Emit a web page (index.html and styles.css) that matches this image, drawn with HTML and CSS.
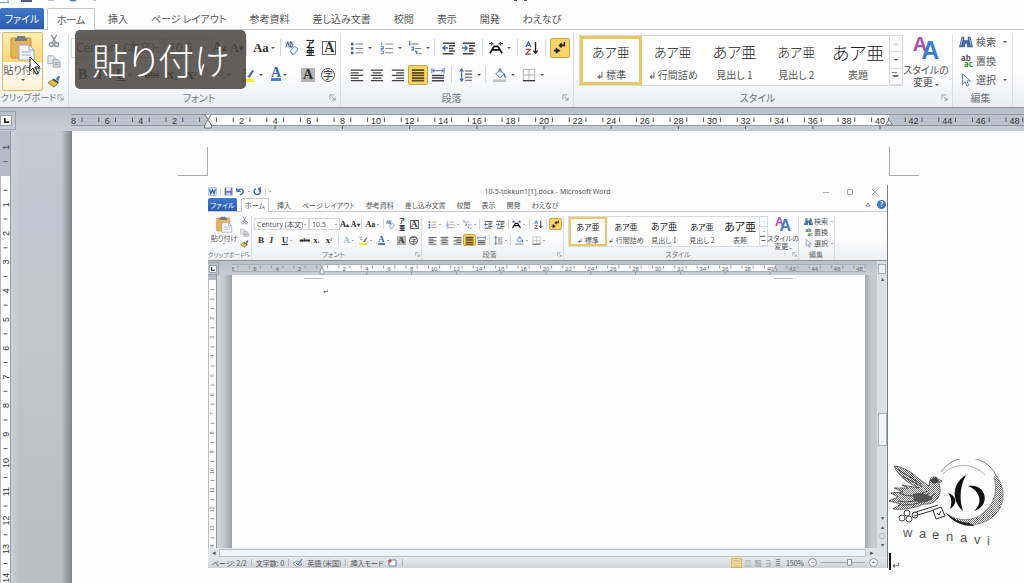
FILE: index.html
```html
<!DOCTYPE html>
<html lang="ja">
<head>
  <meta charset="UTF-8">
  <title>10-5-tokkun1[1].docx - Microsoft Word</title>
  <link rel="stylesheet" href="styles.css">
</head>
<body>

<!-- アイコン -->
<svg class="sprite" aria-hidden="true">
  <symbol id="i-paste" viewBox="0 0 26 26"><rect x="1" y="3" width="20" height="20" rx="1" fill="#e9b35a" stroke="#c98c35"/><path d="M7 3V1h8v2h2v3H5V3z" fill="#777d86"/><path d="M9 10h10l5 5v10H9z" fill="#f4f8fd" stroke="#98a8c0"/><path d="M19 10v5h5M12 17h9M12 20h9" fill="none" stroke="#98a8c0"/></symbol>
  <symbol id="i-cut" viewBox="0 0 16 16"><path d="M5 1l5 9M11 1L6 10" stroke="#858b93" stroke-width="1.5"/><circle cx="5" cy="12" r="2.300" fill="none" stroke="#858b93" stroke-width="1.500"/><circle cx="11" cy="12" r="2.300" fill="none" stroke="#858b93" stroke-width="1.500"/></symbol>
  <symbol id="i-copy" viewBox="0 0 16 16"><path d="M1 2h6l2 2v7H1z" fill="#e6e7e9" stroke="#a8abb0"/><path d="M7 6h5l3 3v6H7z" fill="#d5d7da" stroke="#9a9da3"/><path d="M9 10h4M9 12h4" stroke="#9a9da3"/></symbol>
  <symbol id="i-brush" viewBox="0 0 16 16"><path d="M10 6l3-4 2 1-2 5z" fill="#5d6fa8"/><path d="M1 10l6-4 6 4-5 5z" fill="#e3bd3e" stroke="#8d7a35"/><path d="M7 6l6 4" stroke="#3c4668" stroke-width="2"/></symbol>
  <symbol id="i-eraser" viewBox="0 0 16 16"><rect x="0" y="0" width="11" height="8" fill="#dfe6f2"/><path d="M1 7l2-6 2 6M6 1v6h2q2-3 0-3q1-3-2-3" fill="none" stroke="#34466f"/><path d="M6 11l5-5 4 3-4 6H8z" fill="#e9effa" stroke="#5d79ad"/></symbol>
  <symbol id="i-bullets" viewBox="0 0 16 16"><path d="M1 2h3v3H1zM1 7h3v3H1zM1 12h3v3H1z" fill="#4a6390"/><path d="M6 3.500h9M6 8.500h9M6 13.500h9" stroke="#777"/></symbol>
  <symbol id="i-numbers" viewBox="0 0 16 16"><path d="M2 1v4M1 6.500h3v2H1v1h3M1 11.500h3v3H1" fill="none" stroke="#4a6fb5"/><path d="M6 3.500h9M6 8.500h9M6 13.500h9" stroke="#777"/></symbol>
  <symbol id="i-multi" viewBox="0 0 16 16"><path d="M1 1h1v4M4 7h2v3H4M8 12h2v3" fill="none" stroke="#4a6fb5" stroke-width="1.500"/><path d="M4 3.500h8M8 8.500h7M12 14.500h4" stroke="#666"/></symbol>
  <symbol id="i-outdent" viewBox="0 0 16 16"><path d="M1 2.500h14M8 5.500h7M8 8.500h5M8 11.500h7M1 14.500h12" stroke="#444" stroke-width="1.600"/><path d="M7 8H1M4 5L1 8l3 3" fill="none" stroke="#3f649e" stroke-width="1.500"/></symbol>
  <symbol id="i-indent" viewBox="0 0 16 16"><path d="M1 2.500h14M8 5.500h7M8 8.500h5M8 11.500h7M1 14.500h12" stroke="#444" stroke-width="1.600"/><path d="M0 8h6M3 5l3 3-3 3" fill="none" stroke="#3f649e" stroke-width="1.500"/></symbol>
  <symbol id="i-expand" viewBox="0 0 16 16"><path d="M1 14L6 6h4l5 8M4 10h8" fill="none" stroke="#111" stroke-width="2"/><path d="M0 3h5M3 1v4M11 3h5M13 1v4" stroke="#334674" stroke-width="1.400"/></symbol>
  <symbol id="i-sort" viewBox="0 0 16 16"><path d="M1 7l3-6 3 6M2 5h4" fill="none" stroke="#3f66ad" stroke-width="1.400"/><path d="M1 9.500h5L1 15h6" fill="none" stroke="#a13a43" stroke-width="1.400"/><path d="M12 1v13M9.500 11l2.500 3 2.500-3" fill="none" stroke="#222" stroke-width="1.600"/></symbol>
  <symbol id="i-mark" viewBox="0 0 16 16"><path d="M13 1v4H8M10 2.500L7.500 5 10 7.500M1 11h6M4 8v6M7 11l-3-2v4z" fill="none" stroke="#222" stroke-width="1.800"/></symbol>
  <symbol id="i-left" viewBox="0 0 16 16"><path d="M1 2.500h14M1 5.500h9M1 8.500h14M1 11.500h9M1 14.500h14" stroke="#444" stroke-width="1.500"/></symbol>
  <symbol id="i-center" viewBox="0 0 16 16"><path d="M1 2.500h14M3 5.500h10M1 8.500h14M3 11.500h10M1 14.500h14" stroke="#444" stroke-width="1.500"/></symbol>
  <symbol id="i-right" viewBox="0 0 16 16"><path d="M1 2.500h14M6 5.500h9M1 8.500h14M6 11.500h9M1 14.500h14" stroke="#444" stroke-width="1.500"/></symbol>
  <symbol id="i-justify" viewBox="0 0 16 16"><path d="M1 2.500h14M1 5.500h14M1 8.500h14M1 11.500h14M1 14.500h14" stroke="#5b4a20" stroke-width="2"/></symbol>
  <symbol id="i-distribute" viewBox="0 0 16 16"><path d="M1 0v6M15 0v6M2 3h12M4 1L2 3l2 2M12 1l2 2-2 2" fill="none" stroke="#4269ab"/><path d="M1 8.500h14M1 11.500h14M1 14.500h14" stroke="#444" stroke-width="1.700"/></symbol>
  <symbol id="i-spacing" viewBox="0 0 16 16"><path d="M3 1v14M1 4l2-3 2 3M1 12l2 3 2-3" fill="none" stroke="#3f6db4" stroke-width="1.400"/><path d="M7 3.500h8M7 7h8M7 10.500h8M7 14h8" stroke="#555" stroke-width="1.200"/></symbol>
  <symbol id="i-bucket" viewBox="0 0 16 16"><path d="M3 7l5-5 5 5-5 4z" fill="#e5ecf6" stroke="#596c8f"/><path d="M7 4V1h2v4" fill="none" stroke="#596c8f"/><path d="M12 6q4 2 2 6q-2-2-2-6" fill="#486fad"/><path d="M0 13h15v3H0z" fill="#bcc3ca"/></symbol>
  <symbol id="i-border" viewBox="0 0 16 16"><path d="M1.500 1.500h13v13M8 1.500v13M1.500 8h13M1.500 1.500v13" fill="none" stroke="#aaa"/><path d="M1 14.500h14" stroke="#333" stroke-width="1.500"/></symbol>
  <symbol id="i-binoc" viewBox="0 0 16 16"><path d="M3 2h3v4h4V2h3l3 12H9v-4H7v4H0z" fill="#44699f"/><path d="M4 4L2 12M12 4l2 8" stroke="#b3cae9"/></symbol>
  <symbol id="i-arrow" viewBox="0 0 16 16"><path d="M4 1v12l3-3 2 5 2-1-2-5h4z" fill="#fff" stroke="#5672a4"/></symbol>
  <symbol id="i-pen" viewBox="0 0 16 16"><path d="M7 10l6-8 2 1-5 8z" fill="#5a73a0"/><path d="M1 2h5M2 6h4" stroke="#333"/><path d="M0 12h15v4H0z" fill="#f5ec38"/></symbol>
  <symbol id="i-launch" viewBox="0 0 8 8"><path d="M1 6V1h5M3 3l4 4M7 4v3H4" fill="none" stroke="#8b929c"/></symbol>
  <symbol id="i-word" viewBox="0 0 16 16"><rect x="1" y="1" width="14" height="14" rx="1" fill="#dceafb" stroke="#6e95ca"/><path d="M3 4l2 8 3-7 3 7 2-8" fill="none" stroke="#2c5ca7" stroke-width="2"/></symbol>
  <symbol id="i-save" viewBox="0 0 16 16"><path d="M1 1h14v14H1z" fill="#6577b5"/><path d="M4 1h8v6H4z" fill="#eef2fb"/><path d="M4 10h8v5H4z" fill="#c9d1e8"/></symbol>
  <symbol id="i-undo" viewBox="0 0 16 16"><path d="M3 6q8-5 10 1q0 5-6 7M1 2l1 6 6-1" fill="none" stroke="#4569b8" stroke-width="2.500"/></symbol>
  <symbol id="i-redo" viewBox="0 0 16 16"><path d="M5 3q-5 3-2 8q5 5 9 0q3-5-1-8M14 1l-4 2 2 5" fill="none" stroke="#4569b8" stroke-width="2.500"/></symbol>
</svg>

<!-- タブとリボン（本体と貼り付けた画面で共用） -->
<template id="ribbon-template">
  <nav class="tabs">
    <button class="file-tab">ファイル</button>
    <a href="#" class="home-tab">ホーム</a>
    <a href="#">挿入</a>
    <a href="#">ページ レイアウト</a>
    <a href="#">参考資料</a>
    <a href="#">差し込み文書</a>
    <a href="#">校閲</a>
    <a href="#">表示</a>
    <a href="#">開発</a>
    <a href="#">わえなび</a>
    <span class="tab-tools"><svg viewBox="0 0 6 5"><path d="M1 4l2-3 2 3z" fill="none" stroke="#888"/></svg><button class="help">?</button></span>
  </nav>
  <div class="ribbon">
    <section class="group clipboard">
      <div class="tools">
        <button class="paste"><svg><use href="#i-paste"/></svg><span>貼り付け</span><i class="caret"></i></button>
        <div class="clip-side">
          <button aria-label="切り取り"><svg class="icon"><use href="#i-cut"/></svg></button>
          <button aria-label="コピー"><svg class="icon"><use href="#i-copy"/></svg></button>
          <button aria-label="書式のコピー"><svg class="icon"><use href="#i-brush"/></svg></button>
        </div>
      </div>
      <footer><span>クリップボード</span><svg><use href="#i-launch"/></svg></footer>
    </section>

    <section class="group font">
      <div class="row font-row1">
        <label class="combo"><select aria-label="フォント"><option>Century (本文)</option></select><i class="caret"></i></label>
        <label class="combo"><select aria-label="サイズ"><option>10.5</option></select><i class="caret"></i></label>
        <button class="serif">A<sup>▴</sup></button>
        <button class="serif shrink">A<sup>▾</sup></button>
        <i class="sep"></i>
        <button class="serif shrink">Aa<i class="caret"></i></button>
        <i class="sep"></i>
        <button aria-label="書式のクリア"><svg class="icon"><use href="#i-eraser"/></svg></button>
        <button class="ruby"><span>ア</span><span>亜</span></button>
        <button class="serif"><span class="boxed">A</span></button>
      </div>
      <div class="row font-row2">
        <button class="serif">B</button>
        <button class="serif italic">I</button>
        <button class="serif"><u>U</u><i class="caret"></i></button>
        <button class="serif small"><s>abc</s></button>
        <button class="serif">x<sub>₂</sub></button>
        <button class="serif">x<sup>²</sup></button>
        <i class="sep"></i>
        <button class="serif glow">A<i class="caret"></i></button>
        <button aria-label="蛍光ペン"><svg class="icon"><use href="#i-pen"/></svg><i class="caret"></i></button>
        <button class="serif"><span class="colored">A</span><i class="caret"></i></button>
        <button class="serif"><span class="shaded">A</span></button>
        <button><span class="circled">字</span></button>
      </div>
      <footer><span>フォント</span><svg><use href="#i-launch"/></svg></footer>
    </section>

    <section class="group para">
      <div class="row para-row1">
        <button aria-label="箇条書き"><svg class="icon"><use href="#i-bullets"/></svg><i class="caret"></i></button>
        <button aria-label="段落番号"><svg class="icon"><use href="#i-numbers"/></svg><i class="caret"></i></button>
        <button aria-label="アウトライン"><svg class="icon"><use href="#i-multi"/></svg><i class="caret"></i></button>
        <i class="sep"></i>
        <button aria-label="インデントを減らす"><svg class="icon"><use href="#i-outdent"/></svg></button>
        <button aria-label="インデントを増やす"><svg class="icon"><use href="#i-indent"/></svg></button>
        <i class="sep"></i>
        <button aria-label="拡張書式"><svg class="icon"><use href="#i-expand"/></svg><i class="caret"></i></button>
        <i class="sep"></i>
        <button aria-label="並べ替え"><svg class="icon"><use href="#i-sort"/></svg></button>
        <i class="sep"></i>
        <button class="on" aria-label="編集記号"><svg class="icon"><use href="#i-mark"/></svg></button>
      </div>
      <div class="row para-row2">
        <button aria-label="左揃え"><svg class="icon"><use href="#i-left"/></svg></button>
        <button aria-label="中央揃え"><svg class="icon"><use href="#i-center"/></svg></button>
        <button aria-label="右揃え"><svg class="icon"><use href="#i-right"/></svg></button>
        <button class="on" aria-label="両端揃え"><svg class="icon"><use href="#i-justify"/></svg></button>
        <button aria-label="均等割り付け"><svg class="icon"><use href="#i-distribute"/></svg></button>
        <i class="sep"></i>
        <button aria-label="行間"><svg class="icon"><use href="#i-spacing"/></svg><i class="caret"></i></button>
        <i class="sep"></i>
        <button aria-label="塗りつぶし"><svg class="icon"><use href="#i-bucket"/></svg><i class="caret"></i></button>
        <button aria-label="罫線"><svg class="icon"><use href="#i-border"/></svg><i class="caret"></i></button>
      </div>
      <footer><span>段落</span><svg><use href="#i-launch"/></svg></footer>
    </section>

    <section class="group styles">
      <div class="tools">
        <div class="gallery">
          <button class="selected"><b>あア亜</b><span>↲ 標準</span></button>
          <button><b>あア亜</b><span>↲ 行間詰め</span></button>
          <button><b class="h1">あア亜</b><span>見出し 1</span></button>
          <button><b>あア亜</b><span>見出し 2</span></button>
          <button><b class="title">あア亜</b><span>表題</span></button>
          <div class="gallery-scroll">
            <button aria-label="上へ"><i class="caret up"></i></button>
            <button aria-label="下へ"><i class="caret"></i></button>
            <button aria-label="その他"><i class="caret more"></i></button>
          </div>
        </div>
        <button class="change-style">
          <span class="aa"><span>A</span><span>A</span></span>
          <span>スタイルの</span><span>変更 <i class="caret"></i></span>
        </button>
      </div>
      <footer><span>スタイル</span><svg><use href="#i-launch"/></svg></footer>
    </section>

    <section class="group edit">
      <div class="tools edit-list">
        <button><svg class="icon"><use href="#i-binoc"/></svg>検索<i class="caret"></i></button>
        <button><span class="abac"><span>ab</span><span>ac</span></span>置換</button>
        <button><svg class="icon"><use href="#i-arrow"/></svg>選択<i class="caret"></i></button>
      </div>
      <footer><span>編集</span></footer>
    </section>
  </div>
</template>

<div class="word full">
  <div class="top-strip">
    <svg width="540" height="3" viewBox="0 0 540 3" aria-hidden="true">
      <path d="M0 2.500h9" stroke="#6fa0cf"/><path d="M8 0v3" stroke="#6fa0cf"/>
      <path d="M21 0h11v2H21z" fill="#565a80"/><path d="M48 0h6" stroke="#7789ba"/>
      <path d="M69 0q4 3 8 0" fill="#5a6fb0"/><path d="M93 0h3" stroke="#777"/>
      <path d="M514 0h3v1h-3zM524 0h3v1h-3z" fill="#555"/>
    </svg>
  </div>
  <div class="ribbon-slot"></div>

  <div class="ruler-strip">
    <div class="tab-corner"><button aria-label="タブ"><svg viewBox="0 0 6 6"><path d="M1 0v5h5" fill="none" stroke="#222" stroke-width="2"/></svg></button></div>
    <svg class="ruler" id="ruler-h"></svg>
  </div>

  <div class="workspace">
    <svg class="vruler" id="ruler-v"></svg>
    <div class="desk"></div>
    <main class="page">
      <div class="margin-left"><div class="crop"></div></div>

      <div class="word mini">
        <header class="titlebar">
          <div class="quick">
            <svg class="icon"><use href="#i-word"/></svg><i class="sep"></i>
            <svg class="icon"><use href="#i-save"/></svg>
            <svg class="icon"><use href="#i-undo"/></svg><i class="caret"></i>
            <svg class="icon"><use href="#i-redo"/></svg><i class="sep"></i><i class="caret"></i>
          </div>
          <h1>10-5-tokkun1[1].docx - Microsoft Word</h1>
          <svg class="win-buttons" viewBox="0 0 56 8"><path d="M0 4.500h6M24.500 1.500h5v5h-5zM49 1l6 6M55 1l-6 6" fill="none" stroke="#a9a9a9"/></svg>
        </header>
        <div class="ribbon-slot"></div>
        <div class="mini-body">
          <div class="mini-main">
            <div class="ruler-strip">
              <div class="tab-corner"><button aria-label="タブ"><svg viewBox="0 0 6 6"><path d="M1 0v5h5" fill="none" stroke="#444" stroke-width="2"/></svg></button></div>
              <svg class="ruler" id="mini-ruler-h"></svg>
            </div>
            <div class="workspace">
              <svg class="vruler" id="mini-ruler-v"></svg>
              <div class="desk"></div>
              <div class="mini-page">
                <div class="mini-crops"><i></i><i></i></div>
                <p>↵</p>
              </div>
              <div class="desk-right"></div>
            </div>
            <div class="hscroll"><span>◂</span><div></div><span>▸</span></div>
          </div>
          <div class="vscroll">
            <span class="toggle"></span><span>▴</span>
            <div class="thumb"></div>
            <span>▾</span><span>▴</span><span>○</span><span>▾</span>
          </div>
        </div>
        <footer class="status">
          <span>ページ: 2/2</span><i class="sep"></i>
          <span>文字数: 0</span><i class="sep"></i>
          <svg viewBox="0 0 10 8"><path d="M0 4l5-2 4 3-5 3z" fill="#fff" stroke="#7b94b8"/><path d="M3 4l2 2 4-6" fill="none" stroke="#3d6db5"/></svg>
          <span>英語 (米国)</span><i class="sep"></i>
          <span>挿入モード</span>
          <svg viewBox="0 0 10 8"><path d="M1 1h7v6H1z" fill="#fff" stroke="#5e7bb0"/><circle cx="2" cy="2" r="1.500" fill="#c5423c"/></svg><i class="sep"></i>
          <div class="views">
            <button class="on" aria-label="印刷レイアウト">▤</button><button aria-label="全画面閲覧">▥</button><button aria-label="Web">▧</button><button aria-label="アウトライン">∃</button><button aria-label="下書き">≣</button>
          </div>
          <span>150%</span>
          <button class="round">−</button>
          <input type="range" min="10" max="200" value="135" aria-label="ズーム">
          <button class="round">+</button>
        </footer>
      </div>

      <div class="margin-right">
        <div class="crop"></div>
        <svg class="logo" viewBox="0 0 134 90" role="img" aria-label="waenavi">
          <defs>
            <pattern id="hatch" width="2" height="2" patternUnits="userSpaceOnUse"><path d="M0 2l2-2" stroke="#333" stroke-width=".7"/></pattern>
          </defs>
          <g transform="translate(2 -4)">
            <!-- 月 -->
            <path d="M51 17A32 32 0 0 1 106 20" fill="none" stroke="#555" stroke-width=".7"/>
            <path d="M53 19C65 7 84 8 95 20" fill="none" stroke="#777" stroke-width=".6"/>
            <path d="M106 20C118 36 114 55 100 64C86 73 68 71 57 59C69 67 83 66 92 59C104 50 108 36 104 22z" fill="url(#hatch)" stroke="#555" stroke-width=".6"/>
            <path d="M55 57Q66 67 79 68L85 71Q66 72 55 57z" fill="#222"/>
            <path d="M76 20C62 28 61 46 73 56C69 44 70 31 76 20z" fill="#111"/>
            <path d="M78 31C97 28 101 51 84 56C93 49 91 36 78 31z" fill="#111"/>
            <path d="M58 38C67 41 68 49 60 54C62 48 62 43 58 38z" fill="#111"/>
          </g>
          <g transform="translate(0 -4)">
            <!-- 鳥 -->
            <path d="M6 11C17 12 26 19 31 24L41 31L42 25C43 21 49 21 50 24L54 26L51 28C55 42 47 50 36 49C24 54 14 55 5 54L13 49L1 46L10 42L3 38L15 37L6 33L20 33L14 30L31 33C20 28 11 22 6 11z" fill="url(#hatch)" stroke="#333" stroke-width=".7"/>
            <path d="M9 14L33 29M14 21L35 32M11 38Q26 45 39 36M10 46Q27 50 42 38M14 50Q34 51 48 38" fill="none" stroke="#444"/>
            <path d="M25 39Q34 36 45 43Q38 50 26 46z" fill="#555"/><path d="M42 25l6-3 3 5-6 2z" fill="#444"/>
            <!-- 鍵 -->
            <path d="M25 58L50 50M26 61L53 53" stroke="#333"/>
            <path d="M45 55l8-3 4 9-9 3z" fill="#fff" stroke="#333"/><path d="M49 58l2 2 2-4" fill="none" stroke="#333"/>
            <circle cx="19" cy="58" r="3" fill="none" stroke="#444"/><circle cx="14" cy="63" r="3" fill="none" stroke="#444"/><circle cx="21" cy="64" r="3" fill="none" stroke="#444"/><circle cx="27" cy="60" r="3" fill="none" stroke="#444"/>
          </g>
          <text x="15 31 44 58 72 86 99" y="78 79 80 82 83 85 86">waenavi</text>
        </svg>
        <div class="text-caret"><i></i><span>↵</span></div>
      </div>
    </main>
  </div>

  <div class="caption">貼り付け</div>
  <svg class="pointer" viewBox="0 0 12 19"><path d="M1 1v14l3-3 3 6 2-1-3-6h5z" fill="#fff" stroke="#222"/></svg>
</div>

<script>
  // リボンを両方の画面に入れる
  const tpl = document.getElementById("ribbon-template");
  document.querySelectorAll(".ribbon-slot").forEach(slot => {
    slot.appendChild(tpl.content.cloneNode(true));
  });

  // 水平ルーラー: 2文字ごとに数字
  function drawRuler(id, zero, pitch, end, height, size) {
    const mid = height / 2;
    let s = `<rect x="${zero}" y="1" width="${end - zero}" height="${height - 5}" fill="#fdfdfd"/>`;
    for (let n = -8; n <= 48; n += 2) {
      const x = zero + n / 2 * pitch;
      if (n !== 0) {
        s += `<text x="${x}" y="${mid + size / 2 - 2}" font-size="${size}" text-anchor="middle">${Math.abs(n)}</text>`;
      }
      [-1, 1].forEach(d => {
        if (n === -8 && d < 0) return;
        const t = x + d * pitch / 4;
        s += `<path d="M${t} ${mid - 4}v${size / 2}" />`;
      });
      if (n > 0 && n % 4 === 0 && n <= 40) s += `<path d="M${x} ${height - 3}v3"/>`;
    }
    // インデントマーカー
    const r = size / 2 - 1;
    s += `<path class="marker" d="M${zero - r} 0h${2 * r}l-${r} ${mid - 2} ${r} ${mid - 2}v3h-${2 * r}v-3l${r} -${mid - 2}z"/>`;
    s += `<path class="marker" d="M${end - r} ${height - 4}l${r} -${r + 2} ${r} ${r + 2}z"/>`;
    document.getElementById(id).innerHTML = s;
  }

  // 垂直ルーラー
  function drawVRuler(id, zero, pitch, width, size, last) {
    const mid = width / 2;
    let s = `<rect x="1" y="${zero}" width="${width - 2}" height="900" fill="#fdfdfd"/>`;
    for (let n = -1; n <= last; n++) {
      const y = zero + n * pitch;
      if (n !== 0 && y > 0) {
        s += `<text transform="translate(${mid + size / 3} ${y}) rotate(-90)" font-size="${size}" text-anchor="middle">${Math.abs(n)}</text>`;
      }
      s += `<path d="M${mid - 2} ${y + pitch / 2}h4"/>`;
    }
    document.getElementById(id).innerHTML = s;
  }

  drawRuler("ruler-h", 137, 33.6, 818, 15, 9);
  drawRuler("mini-ruler-h", 90, 22.4, 543, 11, 6);
  drawVRuler("ruler-v", 45, 28.7, 11, 9, 14);
  drawVRuler("mini-ruler-v", 5, 19.1, 9, 5, 14);
</script>

</body>
</html>
```
FILE: styles.css
```css
* {
  box-sizing: border-box;
}

body {
  margin: 0;
  background: #fdfdfd;
  font-family: "Noto Sans CJK JP", sans-serif;
  font-feature-settings: "palt";
  color: #555;
  overflow: hidden;
}

button, select {
  margin: 0;
  padding: 0;
  border: 0;
  background: none;
  color: inherit;
  font: inherit;
  font-feature-settings: inherit;
  line-height: inherit;
}

a {
  color: inherit;
  text-decoration: none;
}

.sprite {
  display: none;
}

/* 大きさ */
.full {
  --text: 10px;
  --icon: 14px;
  --row: 27px;
  --label: 19px;
  --tabs: 22px;
  --caret: 2px;
  --serif: 14px;
  --small: 9px;
}

.mini {
  --text: 7px;
  --icon: 9px;
  --row: 16px;
  --label: 12px;
  --tabs: 14px;
  --caret: 1px;
  --serif: 9px;
  --small: 6px;
}

.word {
  display: flex;
  flex-direction: column;
  font-size: var(--text);
}

.full {
  position: relative;
  height: 100vh;
}

.icon {
  width: var(--icon);
  height: var(--icon);
  flex: none;
  display: block;
}

.caret {
  display: inline-block;
  flex: none;
  border: var(--caret) solid transparent;
  border-top-color: #555;
  border-bottom: 0;
}

.caret.up {
  transform: rotate(180deg);
  opacity: .4;
}

.caret.more {
  border-top-color: #666;
}

.caret.more::before {
  content: "";
  display: block;
  width: 5px;
  height: 1px;
  margin: -5px 0 0 -2px;
  background: #777;
}

.sep {
  width: 1px;
  height: 60%;
  background: #d4d7dc;
}

/* タブ */
.top-strip {
  height: 8px;
  flex: none;
}

.top-strip svg {
  display: block;
}

.tabs {
  display: flex;
  align-items: center;
  gap: 23px;
  height: var(--tabs);
  border-bottom: 1px solid #c5c9cf;
  white-space: nowrap;
}

.file-tab {
  align-self: stretch;
  width: 44px;
  margin-right: -20px;
  border-radius: 2px 2px 0 0;
  background: linear-gradient(#3f78cc, #2a5cae);
  color: #fff;
}

.home-tab {
  display: flex;
  align-items: center;
  justify-content: center;
  width: 48px;
  height: var(--tabs);
  margin: 0 -10px 0 0;
  border: 1px solid #c5c9cf;
  border-bottom: 0;
  border-radius: 2px 2px 0 0;
  background: #fff;
}

.tab-tools {
  display: none;
}

.mini .tabs {
  gap: 11px;
}

.mini .file-tab {
  width: 29px;
  margin-right: -7px;
}

.mini .home-tab {
  width: 28px;
  margin-right: -3px;
}

.mini .tab-tools {
  display: flex;
  align-items: center;
  gap: 6px;
  margin-left: auto;
  padding-right: 1px;
}

.tab-tools svg {
  width: 6px;
  height: 5px;
}

.help {
  width: 9px;
  height: 9px;
  border-radius: 50%;
  background: #3d78cc;
  color: #fff;
  font-weight: bold;
  line-height: 9px;
}

/* リボン */
.ribbon {
  display: flex;
  padding-top: 4px;
  background: linear-gradient(#fff, #fbfbfc 60%, #eceef2);
  border-bottom: 1px solid #8d949c;
}

.group {
  flex: none;
  border-right: 1px solid #dadde2;
  white-space: nowrap;
}

.clipboard { width: 69px; }
.font { width: 272px; }
.para { width: 233px; }
.styles { width: 379px; }
.edit { width: 60px; }

.mini .clipboard { width: 44px; }
.mini .font { width: 170px; }
.mini .para { width: 142px; }
.mini .styles { width: 235px; }
.mini .edit { width: 36px; }

.tools {
  display: flex;
  height: calc(var(--row) * 2);
}

.group footer {
  display: flex;
  align-items: center;
  height: var(--label);
  padding-right: 4px;
  color: #70757d;
}

.group footer span {
  flex: 1;
  text-align: center;
}

.group footer svg {
  width: 7px;
  height: 7px;
}

.mini .group footer {
  padding-right: 1px;
}

.mini .group footer svg {
  width: 5px;
  height: 5px;
}

.clipboard footer span {
  font-size: var(--small);
}

.row {
  display: grid;
  align-items: center;
  height: var(--row);
}

.row button {
  display: flex;
  align-items: center;
  gap: 4px;
  min-width: 0;
}

.mini .row button {
  gap: 2px;
}

.font-row1 { grid-template-columns: 80fr 52fr 19fr 17fr 8fr 29fr 6fr 22fr 18fr 19fr; padding-left: 2px; }
.font-row2 { grid-template-columns: 19fr 19fr 29fr 22fr 20fr 19fr 9fr 26fr 30fr 30fr 20fr 19fr; padding-left: 9px; }
.para-row1 { grid-template-columns: 30fr 28fr 26fr 8fr 19fr 20fr 7fr 28fr 8fr 20fr 5fr 23fr; padding-left: 9px; }
.para-row2 { grid-template-columns: 20fr 21fr 17fr 23fr 20fr 8fr 27fr 8fr 29fr 51fr; padding-left: 9px; }

.mini .font-row2, .mini .para-row1, .mini .para-row2 {
  padding-left: 6px;
}

.row .on {
  justify-content: center;
  width: 20px;
  height: 20px;
  border: 1px solid #c9a54a;
  border-radius: 2px;
  background: #fbd467;
}

.mini .row .on {
  width: 13px;
  height: 12px;
}

.combo {
  display: flex;
  align-items: center;
  height: 20px;
  padding: 0 4px;
  border: 1px solid #d5d8dd;
  background: #fff;
}

.combo select {
  flex: 1;
  min-width: 0;
  appearance: none;
  overflow: hidden;
  font-family: "Noto Sans", "Noto Sans CJK JP", sans-serif;
  font-size: 12px;
}

.mini .combo {
  height: 12px;
  padding: 0 2px;
}

.mini .combo select {
  font-size: 7px;
}

.serif {
  font-family: "Liberation Serif", serif;
  font-size: var(--serif);
  font-weight: bold;
  color: #333;
}

.row .serif {
  gap: 2px;
}

.serif sup, .serif sub {
  font-size: var(--small);
  margin-left: -2px;
}

.row .shrink {
  font-size: 13px;
}

.mini .row .shrink {
  font-size: 8px;
}

.italic {
  font-style: italic;
}

.row .small {
  font-size: var(--text);
}

.row .ruby {
  flex-direction: column;
  align-items: flex-start;
  gap: 0;
  font-size: var(--small);
  font-weight: bold;
  line-height: 8px;
  color: #222;
}

.mini .row .ruby {
  line-height: 5px;
}

.boxed, .shaded, .circled {
  width: var(--icon);
  height: var(--icon);
  line-height: var(--icon);
  text-align: center;
}

.boxed {
  outline: 1px solid #667;
  outline-offset: -1px;
}

.shaded {
  background: #b4b4b4;
}

.circled {
  border-radius: 50%;
  outline: 1px solid #555;
  outline-offset: -1px;
  color: #222;
}

.glow {
  color: #8fb6e0;
}

.colored {
  border-bottom: 3px solid #4a7fc4;
  color: #3466ab;
  line-height: 10px;
}

.mini .colored {
  border-bottom-width: 2px;
  line-height: 7px;
}

/* クリップボード */
.clipboard .tools {
  gap: 4px;
  padding-left: 2px;
}

.paste {
  display: flex;
  flex-direction: column;
  align-items: center;
  width: 41px;
  height: 59px;
  margin-top: -2px;
  padding-top: 2px;
  line-height: 18px;
}

.full > .ribbon-slot .paste {
  border: 1px solid #dcb86a;
  border-radius: 2px;
  background: linear-gradient(#fdeeb8, #fbd877 50%, #fff 51%, #fbf1d2);
}

.paste svg {
  width: 26px;
  height: 26px;
  flex: none;
}

.clip-side {
  display: flex;
  flex-direction: column;
  justify-content: space-between;
}

.mini .clipboard .tools {
  gap: 2px;
}

.mini .paste {
  width: 28px;
  height: 34px;
  line-height: 10px;
}

.mini .paste svg {
  width: 17px;
  height: 17px;
}

/* スタイル */
.styles .tools {
  gap: 3px;
  padding-left: 5px;
}

.gallery {
  display: flex;
  width: 324px;
  height: 51px;
  margin-top: 1px;
  border: 1px solid #d8dbe0;
  background: #fff;
}

.gallery > button {
  flex: 1;
  min-width: 0;
  display: flex;
  flex-direction: column;
  align-items: center;
  justify-content: space-between;
  padding: 5px 0 3px;
  overflow: hidden;
}

.gallery b {
  height: 22px;
  font-size: 13px;
  font-weight: 300;
  line-height: 22px;
  color: #222;
}

.gallery .h1 {
  font-size: 15px;
}

.gallery .title {
  font-size: 18px;
}

.gallery > button span {
  line-height: 15px;
}

.gallery .selected {
  outline: 3px solid #e8c867;
  outline-offset: -3px;
}

.gallery-scroll {
  display: flex;
  flex-direction: column;
  width: 13px;
}

.gallery-scroll button {
  flex: 1;
  display: flex;
  align-items: center;
  justify-content: center;
  border: solid #d8dbe0;
  border-width: 0 0 1px 1px;
}

.change-style {
  width: 40px;
  display: flex;
  flex-direction: column;
  align-items: center;
  line-height: 12px;
}

.aa {
  display: flex;
  height: 30px;
  font-family: "Liberation Sans", sans-serif;
  font-weight: bold;
}

.aa span:first-child {
  font-size: 20px;
  line-height: 20px;
  color: #a64fae;
}

.aa span:last-child {
  margin-left: -6px;
  font-size: 25px;
  line-height: 32px;
  color: #3d7bc8;
}

.mini .styles .tools {
  gap: 0;
  padding-left: 4px;
}

.mini .gallery {
  width: 200px;
  height: 31px;
  margin-top: 0;
}

.mini .gallery > button {
  padding: 3px 0 1px;
}

.mini .gallery b {
  height: 13px;
  font-size: 8px;
  font-weight: normal;
  line-height: 13px;
}

.mini .gallery .h1 {
  font-size: 9px;
}

.mini .gallery .title {
  font-size: 11px;
}

.mini .gallery > button span {
  line-height: 10px;
}

.mini .gallery .selected {
  outline-width: 2px;
  outline-offset: -2px;
}

.mini .gallery-scroll {
  width: 8px;
}

.mini .change-style {
  width: 30px;
  line-height: 8px;
}

.mini .aa {
  height: 18px;
}

.mini .aa span:first-child {
  font-size: 12px;
  line-height: 12px;
}

.mini .aa span:last-child {
  margin-left: -4px;
  font-size: 16px;
  line-height: 20px;
}

/* 編集 */
.edit-list {
  flex-direction: column;
  justify-content: space-between;
  padding-left: 6px;
}

.edit-list button {
  display: flex;
  align-items: center;
  gap: 3px;
  height: 16px;
  line-height: 14px;
}

.edit-list .caret {
  margin-left: 4px;
}

.abac {
  display: flex;
  flex-direction: column;
  width: 14px;
  font-size: 8px;
  font-weight: bold;
  line-height: 6px;
}

.abac span:last-child {
  align-self: flex-end;
  color: #3c8a43;
}

.mini .edit-list {
  padding-left: 5px;
}

.mini .edit-list button {
  gap: 1px;
  height: 10px;
}

.mini .edit-list .caret {
  margin-left: 2px;
}

.mini .abac {
  width: 9px;
  font-size: 5px;
  line-height: 4px;
}

/* ルーラー */
.ruler-strip {
  display: flex;
  flex: none;
  height: 23px;
  background: linear-gradient(#b9bfc6, #c9ced4);
}

.tab-corner {
  width: 16px;
  margin: 3px 55px 1px 0;
  padding: 3px 3px 3px 0;
  border: 1px solid #9ba2aa;
  border-left: 0;
}

.tab-corner button {
  display: flex;
  align-items: center;
  justify-content: center;
  width: 12px;
  height: 11px;
  background: #fff;
  border: 1px solid #9ba2aa;
}

.tab-corner svg {
  width: 5px;
  height: 5px;
}

.ruler {
  flex: 1;
  min-width: 0;
  height: 15px;
  margin-top: 6px;
  background: linear-gradient(#8f969e 1px, #bdc3cc 1px, #bdc3cc 11px, #8f969e 11px, #8f969e 12px, transparent 12px);
}

.ruler text, .vruler text {
  font-family: "Liberation Sans", sans-serif;
  fill: #333;
}

.ruler path, .vruler path {
  stroke: #555;
}

.ruler .marker {
  fill: #eee;
  stroke: #777;
}

.workspace {
  display: flex;
  flex: 1;
  min-height: 0;
}

.vruler {
  flex: none;
  width: 11px;
  height: 100%;
  background: #b5bbc6;
  border-right: 1px solid #9299a3;
}

.desk {
  flex: none;
  width: 61px;
  background: linear-gradient(90deg, #ccd1d8, transparent 8px, transparent 50px, #7d8388), linear-gradient(#c6cbd1, #c1c7d0 20%, #c3c8ca 40%, #babfc2 90%);
}

.page {
  flex: 1;
  display: flex;
  min-width: 0;
  background: #fdfdfd;
}

.margin-left, .margin-right {
  flex: none;
  width: 136px;
  padding-top: 16px;
}

.crop {
  width: 30px;
  height: 29px;
  border: solid #aaa;
  border-width: 0 0 1px 1px;
}

.margin-left .crop {
  margin-left: auto;
  border-width: 0 1px 1px 0;
}

.margin-right {
  display: flex;
  flex-direction: column;
  padding-bottom: 13px;
}

.margin-right .crop {
  margin-left: 1px;
}

/* 貼り付けた画面 */
.mini {
  flex: 1;
  min-width: 0;
  margin: 54px 0 15px;
  border-right: 1px solid #777d86;
}

.titlebar {
  display: flex;
  align-items: center;
  flex: none;
  height: 13px;
}

.quick {
  display: flex;
  align-items: center;
  gap: 3px;
  width: 120px;
  height: 13px;
}

.titlebar h1 {
  flex: 1;
  margin: 0;
  text-align: center;
  font-family: "Noto Sans", sans-serif;
  font-size: 7px;
  font-weight: normal;
}

.win-buttons {
  width: 56px;
  height: 8px;
  margin: 0 8px 0 56px;
}

.mini-body {
  display: flex;
  flex: 1;
  min-height: 0;
}

.mini-main {
  display: flex;
  flex-direction: column;
  flex: 1;
  min-width: 0;
}

.mini .ruler-strip {
  height: 14px;
}

.mini .tab-corner {
  width: 11px;
  margin: 1px 13px 0 0;
  padding: 2px 1px;
}

.mini .tab-corner button {
  width: 8px;
  height: 8px;
}

.mini .tab-corner svg {
  width: 4px;
  height: 4px;
}

.mini .ruler {
  height: 11px;
  margin: 3px 11px 0 0;
  background: linear-gradient(#a9afb7 1px, #c7ccd3 1px, #c7ccd3 7px, #a9afb7 7px, #a9afb7 8px, transparent 8px);
}

.mini .ruler path, .mini .vruler path {
  stroke: #999;
}

.mini .ruler text, .mini .vruler text {
  fill: #666;
}

.mini .vruler {
  width: 9px;
}

.mini .desk {
  width: 15px;
  background: linear-gradient(90deg, #d3d7dc, #c2c7cc 50%, #999fa5);
}

.mini-page {
  flex: 1;
  background: #fdfdfd;
}

.mini-page p {
  margin: 7px 0 0 91px;
  line-height: 10px;
}

.mini-crops {
  display: flex;
  justify-content: space-between;
  padding: 0 72px;
}

.mini-crops i {
  width: 19px;
  height: 4px;
  border-bottom: 1px solid #bbb;
}

.desk-right {
  width: 12px;
  background: linear-gradient(90deg, #a3a9af, #c5cacf 50%);
}

.hscroll {
  display: flex;
  align-items: center;
  height: 9px;
  background: #dfe3e8;
  line-height: 9px;
}

.hscroll span {
  width: 11px;
  text-align: center;
}

.hscroll div {
  flex: 1;
  height: 8px;
  border: 1px solid #bcc2ca;
  background: #eff2f6;
}

.vscroll {
  display: flex;
  flex-direction: column;
  align-items: center;
  width: 10px;
  padding: 3px 0 8px;
  background: #dce0e6;
  line-height: 9px;
  font-size: 6px;
}

.vscroll .toggle {
  width: 8px;
  height: 10px;
  border: 1px solid #a3aab3;
  background: #eff1f4;
}

.vscroll .thumb {
  width: 9px;
  height: 33px;
  margin: 130px 0 auto;
  border: 1px solid #a9b0ba;
  background: #f1f3f6;
}

.status {
  display: flex;
  align-items: center;
  flex: none;
  gap: 4px;
  height: 11px;
  padding: 0 9px 0 4px;
  background: linear-gradient(#e7e9ec, #cfd3d8);
  line-height: 10px;
  white-space: nowrap;
}

.status .sep {
  background: #b2b7be;
}

.status svg {
  width: 10px;
  height: 8px;
}

.views {
  display: flex;
  gap: 2px;
  margin-left: auto;
}

.views button {
  width: 8px;
  color: #888;
}

.views .on {
  width: 11px;
  border: 1px solid #d9b456;
  background: #fbe29a;
  line-height: 8px;
}

.round {
  width: 9px;
  height: 9px;
  border: 1px solid #8b9199;
  border-radius: 50%;
  background: #fff;
  line-height: 7px;
}

.status input {
  appearance: none;
  width: 44px;
  height: 1px;
  margin: 0;
  background: #a5abb3;
}

.status input::-webkit-slider-thumb {
  appearance: none;
  width: 5px;
  height: 7px;
  border: 1px solid #8b9199;
  border-radius: 1px 1px 3px 3px;
  background: #fff;
}

/* ロゴ */
.logo {
  display: block;
  width: 134px;
  height: 90px;
  margin-top: auto;
}

.logo text {
  font-family: "Liberation Sans", sans-serif;
  font-size: 13px;
  fill: #555;
}

.text-caret {
  display: flex;
  align-items: flex-end;
  gap: 1px;
  height: 17px;
  margin: 4px 0 0 1px;
  line-height: 10px;
}

.text-caret i {
  width: 2px;
  height: 17px;
  background: #111;
}

/* 画面の上に重なるもの */
.caption {
  position: absolute;
  left: 75px;
  top: 30px;
  width: 171px;
  height: 59px;
  border-radius: 5px;
  background: rgba(71, 68, 64, .86);
  color: #fff;
  font-size: 36px;
  font-weight: 300;
  line-height: 58px;
  text-align: center;
}

.pointer {
  position: absolute;
  left: 29px;
  top: 56px;
  width: 12px;
  height: 19px;
}
```
